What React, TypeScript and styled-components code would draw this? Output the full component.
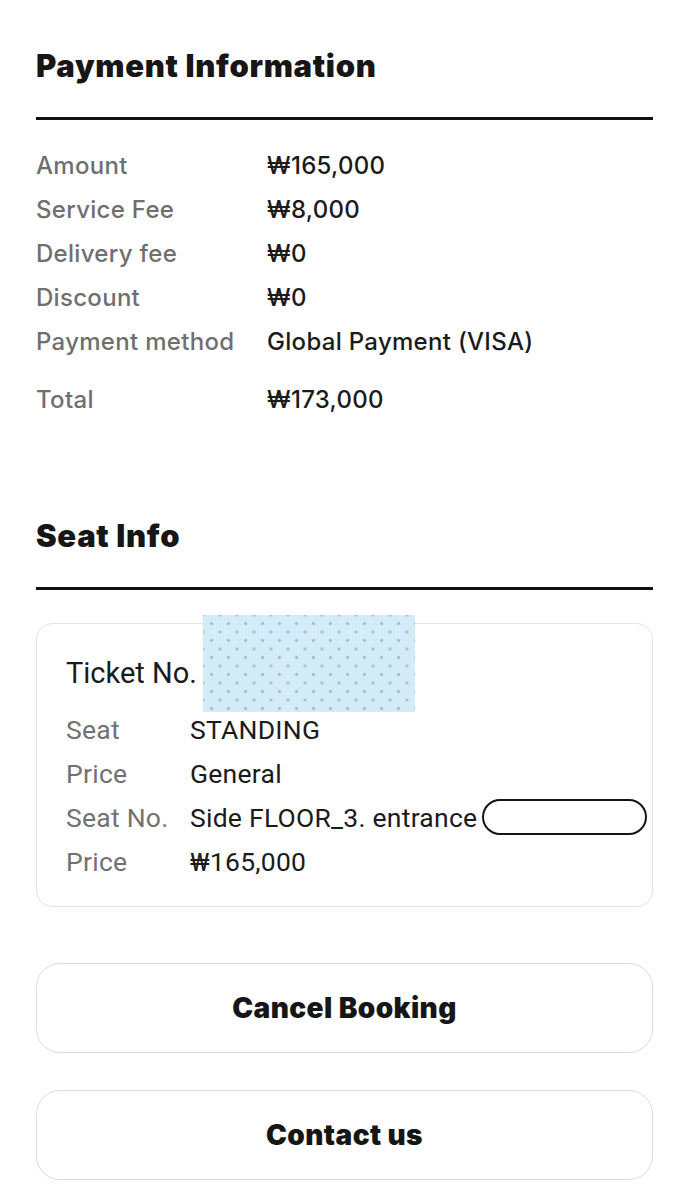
import React from 'react';
import styled, { createGlobalStyle } from 'styled-components';

const GlobalStyle = createGlobalStyle`
  body {
    margin: 0;
    background: #ffffff;
    font-family: Inter, "Noto Sans", "Liberation Sans", sans-serif;
    color: #1b1b1b;
  }
`;

const paymentRows = [
  { label: 'Amount', value: '₩165,000' },
  { label: 'Service Fee', value: '₩8,000' },
  { label: 'Delivery fee', value: '₩0' },
  { label: 'Discount', value: '₩0' },
  { label: 'Payment method', value: 'Global Payment (VISA)' },
];

const App: React.FC = () => {
  return (
    <Page>
      <GlobalStyle />
      <Section>
        <SectionTitle>Payment Information</SectionTitle>
        <Rule />
        <InfoList>
          {paymentRows.map(row => (
            <InfoRow key={row.label}>
              <InfoLabel>{row.label}</InfoLabel>
              <InfoValue>{row.value}</InfoValue>
            </InfoRow>
          ))}
          <InfoRow total>
            <InfoLabel>Total</InfoLabel>
            <InfoValue>₩173,000</InfoValue>
          </InfoRow>
        </InfoList>
      </Section>

      <Section seat>
        <SectionTitle>Seat Info</SectionTitle>
        <Rule />
        <TicketCard>
          <TicketHeader>
            <TicketTitle>Ticket No.</TicketTitle>
            <Redacted />
          </TicketHeader>
          <TicketRow>
            <TicketLabel>Seat</TicketLabel>
            <TicketValue>STANDING</TicketValue>
          </TicketRow>
          <TicketRow>
            <TicketLabel>Price</TicketLabel>
            <TicketValue>General</TicketValue>
          </TicketRow>
          <TicketRow>
            <TicketLabel>Seat No.</TicketLabel>
            <TicketValue>
              Side FLOOR_3. entrance
              <Pill />
            </TicketValue>
          </TicketRow>
          <TicketRow>
            <TicketLabel>Price</TicketLabel>
            <TicketValue>₩165,000</TicketValue>
          </TicketRow>
        </TicketCard>
      </Section>

      <Actions>
        <ActionButton>Cancel Booking</ActionButton>
        <ActionButton>Contact us</ActionButton>
      </Actions>
    </Page>
  );
};

interface RowProps {
  total?: boolean;
}

interface SectionProps {
  seat?: boolean;
}

const Page = styled.div`
  width: 689px;
  box-sizing: border-box;
  padding: 44px 36px 0 36px;
`;

const Section = styled.section<SectionProps>`
  margin-top: ${p => (p.seat ? '93px' : '0')};
`;

const SectionTitle = styled.h2`
  margin: 0;
  font-family: Inter, sans-serif;
  font-weight: 900;
  font-size: 31px;
  line-height: 44px;
  letter-spacing: 0.7px;
  color: #161616;
`;

const Rule = styled.div`
  height: 3px;
  background: #111111;
  margin-top: 29px;
`;

const InfoList = styled.div`
  display: flex;
  flex-direction: column;
  margin-top: 23px;
`;

const InfoRow = styled.div<RowProps>`
  display: grid;
  grid-template-columns: 231px 1fr;
  height: 44px;
  align-items: center;
  margin-top: ${p => (p.total ? '14px' : '0')};
`;

const InfoLabel = styled.span`
  font-size: 24px;
  font-weight: 500;
  letter-spacing: 0.3px;
  color: #6f6f6f;
`;

const InfoValue = styled.span`
  font-size: 24px;
  font-weight: 500;
  letter-spacing: 0.3px;
  color: #1b1b1b;
`;

const TicketCard = styled.div`
  margin-top: 33px;
  border: 1.5px solid #e3e3e3;
  border-radius: 16px;
  padding: 24px 29px 23px 29px;
  font-family: Roboto, "Noto Sans", sans-serif;
`;

const TicketHeader = styled.div`
  display: flex;
  align-items: center;
  height: 50px;
  position: relative;
  margin-bottom: 9px;
`;

const TicketTitle = styled.span`
  font-size: 29px;
  color: #1b1b1b;
`;

const Redacted = styled.div`
  position: absolute;
  left: 137px;
  top: -33px;
  width: 212px;
  height: 97px;
  background-color: #d3ecf8;
  background-image: radial-gradient(circle, #9fbfd6 1.3px, transparent 1.6px),
    radial-gradient(circle, #9fbfd6 1.3px, transparent 1.6px);
  background-size: 17px 17px;
  background-position: 0 0, 8.5px 8.5px;
`;

const TicketRow = styled.div`
  display: grid;
  grid-template-columns: 124px 1fr;
  height: 44px;
  align-items: center;
`;

const TicketLabel = styled.span`
  font-size: 26.5px;
  letter-spacing: 0.25px;
  color: #727272;
`;

const TicketValue = styled.span`
  display: flex;
  align-items: center;
  font-size: 26.5px;
  letter-spacing: 0.25px;
  color: #1b1b1b;
  white-space: nowrap;
`;

const Pill = styled.span`
  display: inline-block;
  flex-shrink: 0;
  margin-left: 5px;
  width: 165px;
  height: 36px;
  border: 2px solid #151515;
  border-radius: 18px;
  box-sizing: border-box;
`;

const Actions = styled.div`
  display: flex;
  flex-direction: column;
  gap: 37px;
  margin-top: 56px;
`;

const ActionButton = styled.button`
  height: 90px;
  width: 100%;
  background: #ffffff;
  border: 1.5px solid #dcdcdc;
  border-radius: 24px;
  font-family: Inter, sans-serif;
  font-weight: 900;
  font-size: 28px;
  letter-spacing: 0.4px;
  color: #161616;
  cursor: pointer;
`;

export default App;
